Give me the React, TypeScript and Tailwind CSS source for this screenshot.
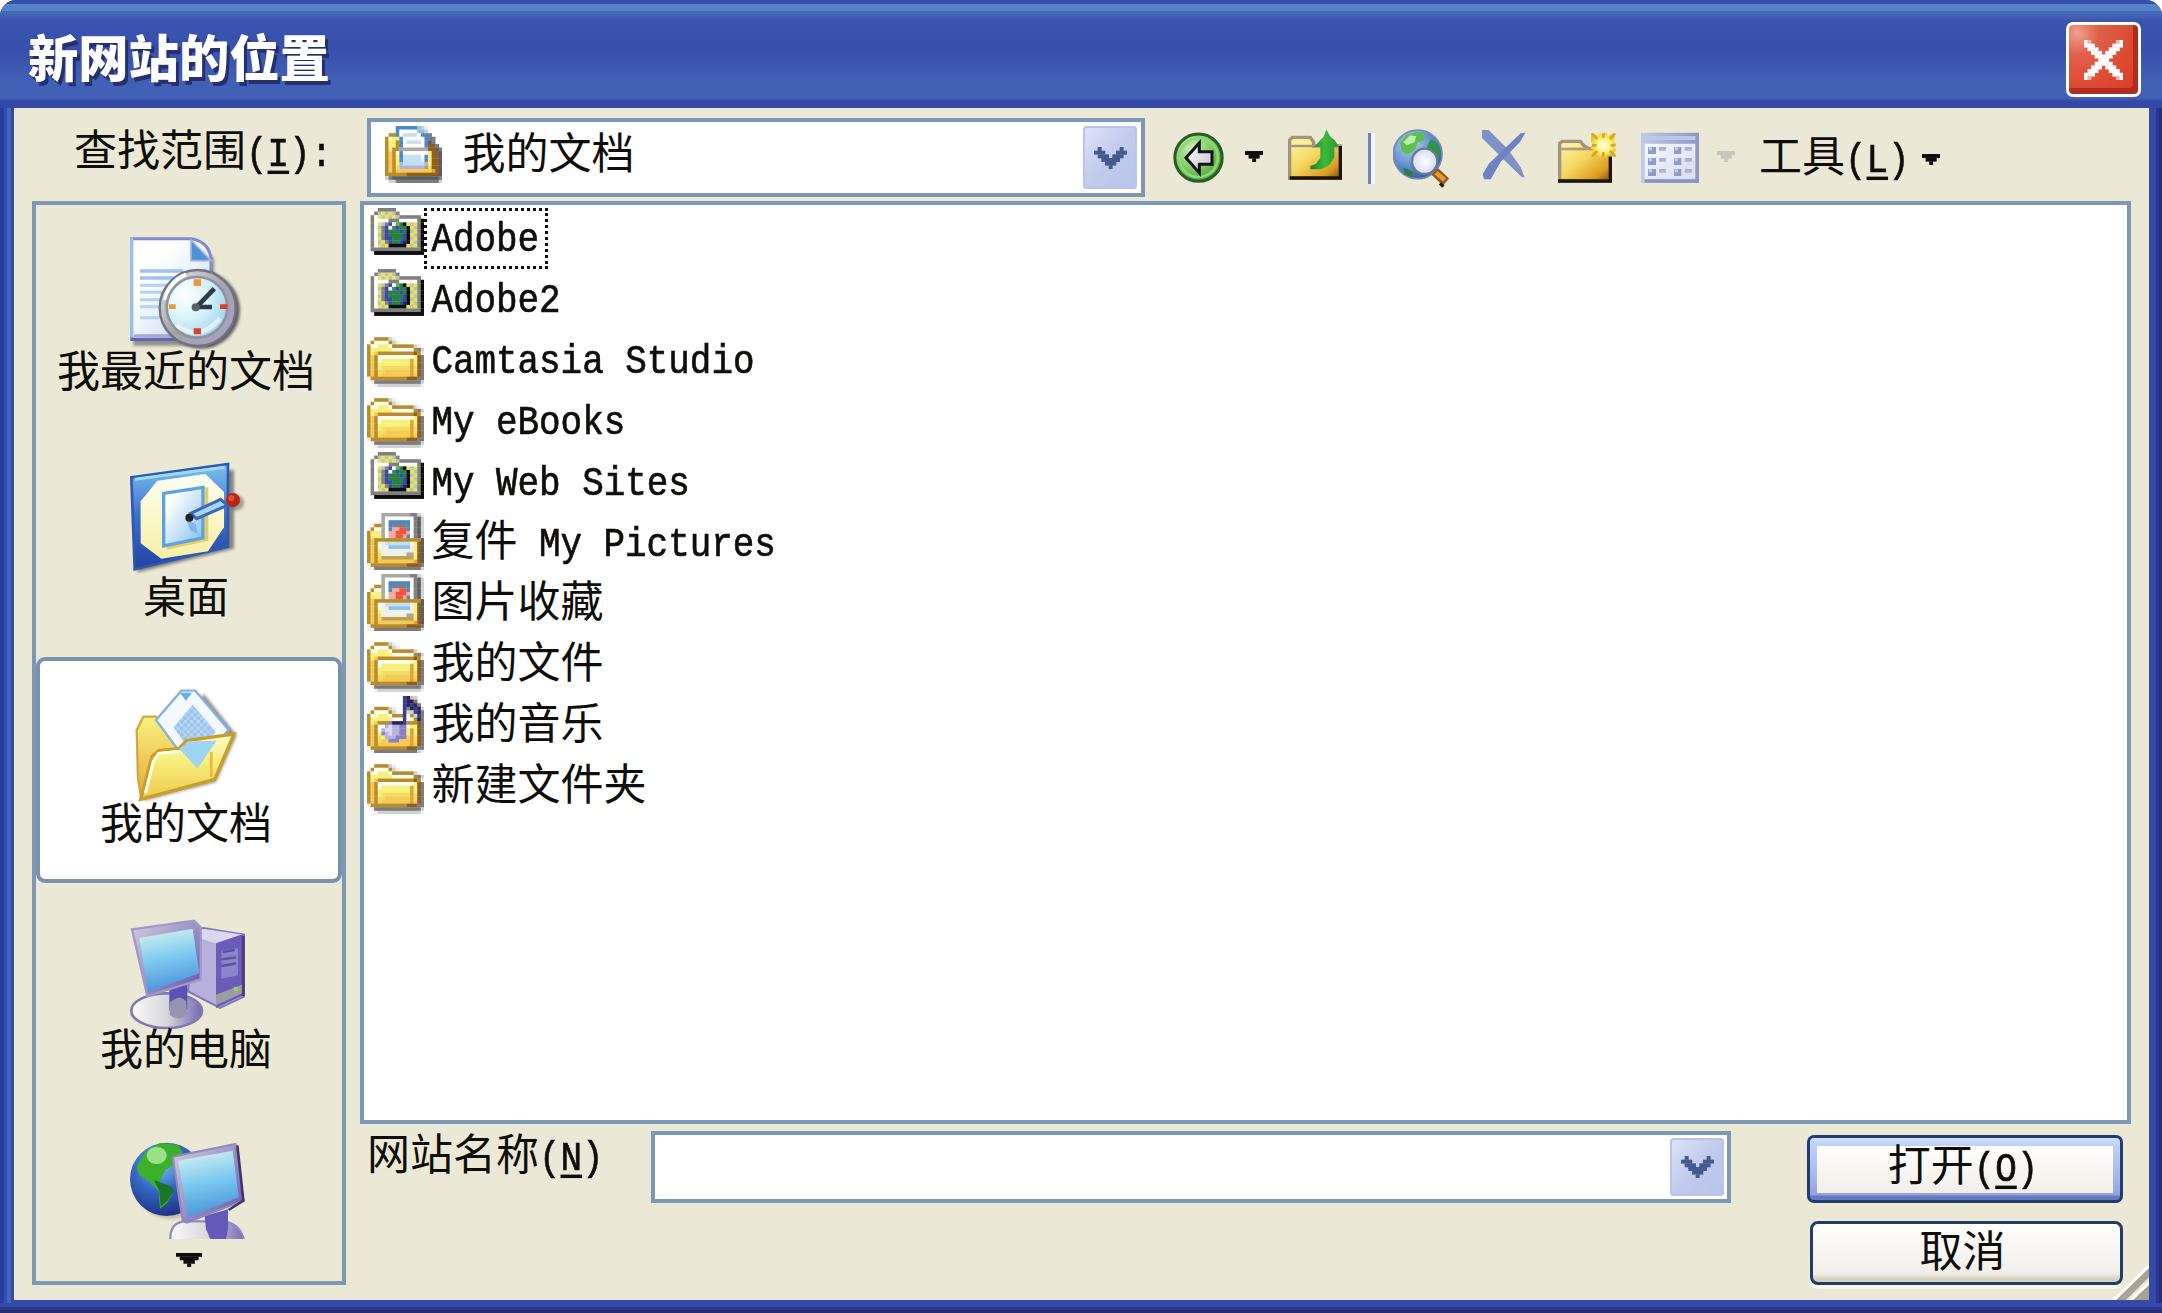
import React from "react";

type Palette = Record<string, string>;

function PixelArt({
  rows,
  palette,
  className = "h-[57.4px] w-[57.4px] shrink-0",
}: {
  rows: string[];
  palette: Palette;
  className?: string;
}) {
  const cells: React.ReactNode[] = [];
  rows.forEach((row, y) => {
    let x = 0;
    while (x < row.length) {
      const c = row[x];
      let n = 1;
      while (row[x + n] === c) n++;
      if (palette[c]) cells.push(<rect key={x + "-" + y} x={x} y={y} width={n + 0.08} height={1.08} fill={palette[c]} />);
      x += n;
    }
  });
  return (
    <svg className={className} viewBox={`0 0 ${rows[0].length} ${rows.length}`} preserveAspectRatio="none">
      {cells}
    </svg>
  );
}

const palette: Palette = {
  G: "#808080", W: "#ffffff", Y: "#e6e84a", S: "#c0c0b8", B: "#3a4aa8", N: "#2a8040", L: "#5cb84c",
  T: "#3c8090", K: "#0c0c0c", D: "#1f2a6c",
  O: "#b98c2a", o: "#8f5f1c", y: "#f6f07c", l: "#fffef0", a: "#f5cb55", m: "#dca43a", e: "#f4dc62",
  s: "#7c7c7e", t: "#d2d2d2", u: "#efefef",
  g: "#a8a8a6", d: "#5c5c60", b: "#4c88c6", r: "#ee5540", p: "#f6aaa0", c: "#c4e0f2", q: "#8cc0e6", i: "#f0f0e8", h: "#bda050",
  v: "#3a3c8c", n: "#23265c", f: "#b8aee0", k: "#8a80c4", w: "#dcd8f2",
  x: "#0f0e0c", z: "#455a8c", j: "#c6c6ba", A: "#f4b0a4",
};

const webFolder = [
  "...GGGGG........",
  "..GSYSYSG.......",
  ".GWYSYSYSGGGGGG.",
  ".GWWWWGGGWWWWWGK",
  ".GWYSGBWLNKYSYGK",
  ".GWSGBWTBNNKYSGK",
  ".GWYGBNNNBNKSYGK",
  ".GWSGBNNNNBKYSGK",
  ".GWYGBBNNNBKSYGK",
  ".GWSYGBNNBDKYSGK",
  ".GWYSYKKKKKYSYGK",
  ".GGGGGGGGGGGGGGK",
  "..KKKKKKKKKKKKKK",
  "................",
  "................",
  "................",
];
const folder = [
  "................",
  "................",
  "..OOOOtu........",
  ".OllllOtu.......",
  "OllyyylOOOOOOtu.",
  "OyyyyyyllllllOst",
  "OyaOOOOOOOOOOoOu",
  "OaOllllllllllyos",
  "OaOlyyyyyyyymyos",
  "OaOyyyyyyyyymyos",
  "OaOyeeeeeeeemeos",
  "OaOeeaaaaaaameos",
  "OaOeaaaaaaaamaos",
  "uOOOOOOOOOOoooss",
  ".ussssssssssssst",
  "..uttttttttttttu",
];
const pictures = [
  "....ggggggggGGtu",
  "....gWWWWWWWWGdt",
  "....gWbbbbbbWGdt",
  "..OOgWbGGGGbWGdt",
  ".OllgWbpprrbWGdt",
  "OyyygWpprrrpWGdt",
  "OyyygWpprrpbWGdt",
  "OaOOOOOOOOOOOOOd",
  "OaOliccccccciyod",
  "OaOliiqqqqqqiyod",
  "OaOyiiiiiiiiiyod",
  "OaOeiiiiiiiggyod",
  "OaOehhhhhhhhhyod",
  "OaOaaaaaaaaaamod",
  "uOOOOOOOOOOoooos",
  "uussssssssssssst",
];
const music = [
  "..........vnpt..",
  "..........vnns..",
  "..........vnvns.",
  "..OOOOtu..vsnvnt",
  ".OllllOt..vttvns",
  "OllyyylOOOvlOtvs",
  "OyyyyyylllvllOns",
  "OyaOOOknnnvOOOos",
  "OaOllfwffkklyyos",
  "OaOlfwwffkkymyos",
  "OaOykfwffkkymyos",
  "OaOeyfffkkkameos",
  "OaOeaakkkaaameos",
  "OaOaaaaaaaaamaos",
  "uOOOOOOOOOOoooss",
  "uusssssssssssstu",
];
const clipboard = [
  "...bbbbbbqtu....",
  "...bWWWWWqqt....",
  ".OObWccccWbbs...",
  "OlyybWWWWWWbss..",
  "OyyObWccccWbds..",
  "OyyObWWWWWWboos.",
  "OyOOggggggggoods",
  "OaOlbWWWWWWWyood",
  "OaOybcccccWbyood",
  "OaOybcccccibyood",
  "OaOyfccccccfyood",
  "OaOefffffffheood",
  "OaOaaaaaaaaaamod",
  "OOOOOOoooooooood",
  "tsddddddddddddds",
  ".ttsssssssssssst",
];
const chevron = [
  ".z.....z.",
  "zzz...zzz",
  ".zzz.zzz.",
  "..zzzzz..",
  "...zzz...",
  "....z....",
];
const cross = [
  "WA.......AW",
  "WWW.....WWW",
  ".WWW...WWW.",
  "..WWW.WWW..",
  "...WWWWW...",
  "....WWW....",
  "...WWWWW...",
  "..WWW.WWW..",
  ".WWW...WWW.",
  "WWW.....WWW",
  "WA.......AW",
];
const caret = ["xxxxx", ".xxx.", "..x.."];
const caretOff = ["jjjjj", ".jjj.", "..j.."];
const caretBig = ["xxxxxxx", ".xxxxx.", "..xxx..", "...x..."];

function Mono({ children }: { children: React.ReactNode }) {
  return (
    <span className="inline-block origin-[50%_72%] scale-y-[1.15] font-['Liberation_Mono','DejaVu_Sans_Mono',monospace] text-[35.9px] leading-[43px] [-webkit-text-stroke:0.6px_#0f0e0c]">
      {children}
    </span>
  );
}

/** Splits a caption into Chinese and Latin runs, so that Latin letters take half a cell each. */
function Txt({ children }: { children: string }) {
  const runs = children.split(/([\x20-\x7e]+)/).filter(Boolean);
  return <>{runs.map((r, i) => (/^[\x20-\x7e]/.test(r) ? <Mono key={i}>{r}</Mono> : <span key={i}>{r}</span>))}</>;
}

function Key({ k }: { k: string }) {
  return (
    <Mono>
      (<span className="underline decoration-[3px] underline-offset-[4px]">{k}</span>)
    </Mono>
  );
}

function DropButton() {
  return (
    <div className="flex h-full w-[54px] items-center justify-center rounded-[4px] bg-linear-to-br from-[#dfe5f7] via-[#c1cbec] to-[#b4c4ea] shadow-[inset_0_0_0_2px_#b9c4ea]">
      <PixelArt rows={chevron} palette={palette} className="h-[22px] w-[33px]" />
    </div>
  );
}

function BackIcon() {
  return (
    <svg className="h-[60px] w-[51px]" viewBox="309 57 153 180">
      <defs>
        <radialGradient id="bk" cx=".35" cy=".3" r=".75">
          <stop offset="0" stopColor="#c8ecb8" />
          <stop offset=".6" stopColor="#7cc85c" />
          <stop offset="1" stopColor="#4f9a3c" />
        </radialGradient>
        <linearGradient id="bka" x1="0" x2="1" y1="0" y2="1">
          <stop offset="0" stopColor="#fff" />
          <stop offset="1" stopColor="#c4c0cc" />
        </linearGradient>
      </defs>
      <circle cx="385.500" cy="143" r="71" fill="url(#bk)" stroke="#285c28" strokeWidth="9" />
      <circle cx="385.500" cy="143" r="58" fill="none" stroke="#8fd878" strokeWidth="8" />
      <path d="M348 143l40-44v26h38v38h-38v26z" fill="url(#bka)" stroke="#14141c" strokeWidth="9" />
    </svg>
  );
}

function FolderGradient({ id }: { id: string }) {
  return (
    <linearGradient id={id} x1="0" x2="1" y1="0" y2="1">
      <stop offset="0" stopColor="#fff8b0" />
      <stop offset=".45" stopColor="#f4d860" />
      <stop offset=".8" stopColor="#dd9c20" />
      <stop offset="1" stopColor="#7a4c10" />
    </linearGradient>
  );
}

function UpIcon() {
  return (
    <svg className="h-[60px] w-[54px]" viewBox="654 57 162 180">
      <defs>
        <FolderGradient id="up" />
        <linearGradient id="upa" x1="0" x2="1">
          <stop offset="0" stopColor="#1e7a2c" />
          <stop offset=".5" stopColor="#3cba3c" />
          <stop offset="1" stopColor="#2c9434" />
        </linearGradient>
      </defs>
      <path d="M659 205V90l8-8h54l10 14v12h80v97z" fill="url(#up)" stroke="#a3947c" strokeWidth="10" />
      <path d="M668 96h52" stroke="#faf09a" strokeWidth="10" />
      <path d="M664 108h70" stroke="#a3947c" strokeWidth="7" />
      <path d="M811 108v97M659 204h157" stroke="#1c1408" strokeWidth="10" fill="none" />
      <path d="M769 58l12 22 13 10 13 20h-14v32l-14 22-24 14h-34v-10l16-6 14-18v-34h-18l18-20 10-10z" fill="url(#upa)" />
    </svg>
  );
}

function SearchWebIcon() {
  return (
    <svg className="h-[60px] w-[57px]" viewBox="969 57 171 180">
      <defs>
        <radialGradient id="gl" cx=".35" cy=".3" r=".8">
          <stop offset="0" stopColor="#b4d0f4" />
          <stop offset=".6" stopColor="#5c88cc" />
          <stop offset="1" stopColor="#2c5090" />
        </radialGradient>
        <radialGradient id="len">
          <stop offset="0" stopColor="#fff" />
          <stop offset="1" stopColor="#d4dcf0" />
        </radialGradient>
      </defs>
      <circle cx="1043" cy="133" r="73" fill="url(#gl)" stroke="#6f8db4" strokeWidth="5" />
      <path d="M990 100l18-24 30-10 28 4-4 20-20 8-6 22-26 14-14-10z" fill="#5cc050" />
      <path d="M1000 96l20-20 18 2-4 18-24 10z" fill="#c0eca8" />
      <path d="M1082 88l20 12 10 28-8 18-20-22-16-6z" fill="#2f9444" />
      <path d="M1000 172l30 14-4 16-22-8z" fill="#2c7c50" />
      <path d="M1094 184l34 32" stroke="#8c5a20" strokeWidth="28" />
      <path d="M1098 188l26 22" stroke="#e8982c" strokeWidth="14" />
      <path d="M1110 220l10 10" stroke="#2c1c14" strokeWidth="10" />
      <circle cx="1064" cy="154" r="38" fill="url(#len)" stroke="#6c7890" strokeWidth="7" />
    </svg>
  );
}

function DeleteIcon() {
  return (
    <svg className="h-[60px] w-[46px]" viewBox="0 57 138 180" fill="none">
      <path d="M6 60h20l58 58 38 54 12 30h-8L64 142 6 84z" fill="#7f92c6" />
      <path d="M136 68l-14 2-44 42-52 50-18 30 4 16h20l30-52 58-60z" fill="#6e84c0" />
    </svg>
  );
}

function NewFolderIcon() {
  return (
    <svg className="h-[60px] w-[58px]" viewBox="234 57 174 180">
      <defs>
        <FolderGradient id="nf" />
        <radialGradient id="star">
          <stop offset="0" stopColor="#fffff0" />
          <stop offset=".6" stopColor="#fcf070" />
          <stop offset="1" stopColor="#ecc830" />
        </radialGradient>
      </defs>
      <path d="M239 213V100l8-6h54l12 14 14 8h64v97z" fill="url(#nf)" stroke="#a3947c" strokeWidth="10" />
      <path d="M248 106h52" stroke="#faf09a" strokeWidth="9" />
      <path d="M244 117h80" stroke="#ab9a8c" strokeWidth="8" />
      <path d="M391 140v73M234 213h162" stroke="#1c1408" strokeWidth="10" fill="none" />
      <path d="M333 68l22 10 4-10 8 10 4-10h8l4 10 25-10-8 26 8 4v8l-8 4 8 8v6l-8 4 8 14-26-8-8 10-6-10-8 8-6-8-21 10 8-24-8-4v-8l8-4-8-8z" fill="url(#star)" />
      <path d="M336 71l16 16m38 36l16 16M404 71l-14 16m-38 36l-16 16M370 70v14m0 42v14M336 106h14m42 0h14" stroke="#d4a820" strokeWidth="8" />
    </svg>
  );
}

function ViewsIcon() {
  const y = [111, 144, 177];
  return (
    <svg className="h-[60px] w-[58px]" viewBox="483 57 174 180">
      <defs>
        <linearGradient id="vw" x1="0" x2="1" y1="0" y2="1">
          <stop offset="0" stopColor="#f4f8ff" />
          <stop offset="1" stopColor="#dcdcec" />
        </linearGradient>
        <linearGradient id="vh" x1="0" x2="1">
          <stop offset="0" stopColor="#c0cae8" />
          <stop offset="1" stopColor="#8c96c4" />
        </linearGradient>
      </defs>
      <path d="M483 68h174v150H483z" fill="url(#vh)" />
      <path d="M494 78h152v12H494z" fill="#bcc8e4" />
      <path d="M494 101h152v108H494z" fill="url(#vw)" />
      <path d="M494 213h163" stroke="#8494c4" strokeWidth="10" />
      {y.map((v) => (
        <g key={v} fill="#8e9ccc">
          <path d={`M504 ${v}h24v21h-24zM582 ${v}h22v21h-22z`} />
          <path d={`M537 ${v}h21v11h-21zM614 ${v}h22v11h-22z`} fill="#a8b4d8" />
          <path d={`M506 ${v + 1}h10v9h-10zM584 ${v + 1}h10v9h-10z`} fill="#c4cce8" />
        </g>
      ))}
    </svg>
  );
}

const placeSvg = "h-[120px] w-[120px] shrink-0 overflow-visible";

function RecentIcon() {
  return (
    <svg className={placeSvg} viewBox="327 123 360 360">
      <defs>
        <linearGradient id="rd" x1="0" x2="1" y1="0" y2="1">
          <stop offset=".3" stopColor="#ffffff" />
          <stop offset="1" stopColor="#b8d4f4" />
        </linearGradient>
        <radialGradient id="rc" cx=".3" cy=".3" r=".8">
          <stop offset="0" stopColor="#fff" />
          <stop offset=".5" stopColor="#d8f2f8" />
          <stop offset="1" stopColor="#9cd0f0" />
        </radialGradient>
        <linearGradient id="rr" x1="0" x2="1" y1="0" y2="1">
          <stop offset="0" stopColor="#e8e8e8" />
          <stop offset=".5" stopColor="#a4a4ac" />
          <stop offset="1" stopColor="#a8a0cc" />
        </linearGradient>
        <filter id="soft"><feGaussianBlur stdDeviation="5" /></filter>
      </defs>
      <path d="M340 155h184l58 50v262H340z" fill="#555" opacity=".6" filter="url(#soft)" />
      <path d="M335 146h178q54 8 60 60v242H335z" fill="url(#rd)" stroke="#7f8cc8" strokeWidth="9" />
      <path d="M335 142v308" stroke="#9cc0ec" strokeWidth="9" />
      <path d="M332 448h190" stroke="#6068b0" strokeWidth="10" />
      <path d="M342 437h180" stroke="#aaa4d8" strokeWidth="9" />
      <path d="M360 243h130M360 264h110" stroke="#9cc4ea" strokeWidth="11" />
      <path d="M360 286h90M360 307h80M360 329h76M360 350h76M360 383h76" stroke="#b0d4f2" strokeWidth="9" />
      <path d="M513 150v62h60z" fill="#4c94dc" stroke="#a8b0dc" strokeWidth="5" />
      <circle cx="544" cy="360" r="116" fill="#303038" opacity=".75" filter="url(#soft)" />
      <circle cx="533" cy="354" r="114" fill="url(#rr)" stroke="#73737c" strokeWidth="7" />
      <path d="M436 330q12-58 62-76" stroke="#fff" strokeWidth="12" fill="none" />
      <circle cx="531" cy="352" r="91" fill="url(#rc)" stroke="#8c949c" strokeWidth="8" />
      <path d="M470 405q70 54 130-20" stroke="#fff" strokeWidth="14" fill="none" opacity=".6" />
      <path d="M521 268h22v20h-22zM447 343h20v14h-20z" fill="#f09838" />
      <path d="M600 343h22v14h-22zM521 415h22v18h-22z" fill="#dc4028" />
      <path d="M531 350l52-54M528 351h48" stroke="#2c3c48" strokeWidth="14" />
      <circle cx="527" cy="352" r="12" fill="#58606c" />
    </svg>
  );
}

function DesktopIcon() {
  return (
    <svg className={placeSvg} viewBox="327 801 360 360">
      <defs>
        <linearGradient id="df" x1="0" x2="0" y1="0" y2="1">
          <stop offset="0" stopColor="#7cc0f0" />
          <stop offset=".5" stopColor="#3c70c8" />
          <stop offset="1" stopColor="#2440a4" />
        </linearGradient>
        <linearGradient id="dy" x1="0" x2="0" y1="0" y2="1">
          <stop offset="0" stopColor="#fffef4" />
          <stop offset="1" stopColor="#f6f0a4" />
        </linearGradient>
        <linearGradient id="dp" x1="0" x2="1" y1="0" y2="1">
          <stop offset=".2" stopColor="#fff" />
          <stop offset="1" stopColor="#84bcf0" />
        </linearGradient>
      </defs>
      <path d="M352 870l290-30v236l-290 72z" fill="#444" opacity=".6" filter="url(#soft)" />
      <path d="M334 862l290-40v248l-280 68z" fill="url(#df)" stroke="#3058b0" strokeWidth="8" />
      <path d="M345 868l268-36" stroke="#9cdcf8" strokeWidth="9" />
      <path d="M412 872l144-20 56 54v106l-48 72-140 22-62-46V934z" fill="url(#dy)" />
      <path d="M560 892v156l-120 26" stroke="#e8cc60" strokeWidth="10" fill="none" />
      <path d="M431 910l118-18v152l-118 24z" fill="url(#dp)" stroke="#5ca4e0" strokeWidth="10" />
      <path d="M512 970l90-42 20 18-92 40z" fill="#a8d4f8" stroke="#3c68b8" strokeWidth="9" />
      <path d="M500 990l28 12 4 30-22-12z" fill="#7cb8ec" />
      <circle cx="508" cy="983" r="12" fill="#20241c" />
      <circle cx="648" cy="938" r="24" fill="#555" opacity=".5" filter="url(#soft)" />
      <circle cx="639" cy="930" r="21" fill="#b82418" />
      <circle cx="634" cy="924" r="9" fill="#e8502c" />
    </svg>
  );
}

function DocumentsIcon() {
  return (
    <svg className={placeSvg} viewBox="327 129 360 360">
      <defs>
        <linearGradient id="mf" x1="0" x2="0" y1="0" y2="1">
          <stop offset="0" stopColor="#fffbd0" />
          <stop offset=".4" stopColor="#f6f07c" />
          <stop offset="1" stopColor="#f0c850" />
        </linearGradient>
        <linearGradient id="mb" x1="0" x2="0" y1="0" y2="1">
          <stop offset="0" stopColor="#f8f080" />
          <stop offset="1" stopColor="#e8a838" />
        </linearGradient>
        <pattern id="chk" width="20" height="20" patternUnits="userSpaceOnUse">
          <path d="M0 0h20v20H0z" fill="#b8d6f2" />
          <path d="M0 0h10v10H0zM10 10h10v10H10z" fill="#98c2ea" />
        </pattern>
      </defs>
      <path d="M372 482l10-130 170-190 98 124-62 140z" fill="#555" opacity=".65" filter="url(#soft)" />
      <path d="M350 270l20-40h38l12 16 60 50v60l-116 120-10-60z" fill="url(#mb)" stroke="#d0a840" strokeWidth="7" />
      <path d="M408 240l76-88h42l100 118-60 60-94-4z" fill="#f4f8ff" stroke="#88b0e0" strokeWidth="7" />
      <path d="M460 262l58-68 70 82-40 40-48 2z" fill="url(#chk)" />
      <path d="M480 158h36l-18 24z" fill="#68ace8" />
      <path d="M362 478l34-128 20-18 60-6 24-24 142-20-58 136z" fill="url(#mf)" stroke="#c8a028" strokeWidth="10" />
      <path d="M376 460l24-96 16-24 62-6" stroke="#fffef0" strokeWidth="9" fill="none" />
      <path d="M478 326l28-22 84-2-58 84z" fill="#a0d4f4" />
      <path d="M574 336v76" stroke="#f0b848" strokeWidth="8" />
    </svg>
  );
}

function MonitorGradients({ p }: { p: string }) {
  return (
    <defs>
      <linearGradient id={p + "s"} x1=".3" x2=".5" y1="0" y2="1">
        <stop offset="0" stopColor="#d4f0f0" />
        <stop offset=".45" stopColor="#80ccf0" />
        <stop offset="1" stopColor="#4890d8" />
      </linearGradient>
      <linearGradient id={p + "b"} x1="0" x2="1">
        <stop offset="0" stopColor="#fafafa" />
        <stop offset=".5" stopColor="#d8d8dc" />
        <stop offset="1" stopColor="#7468b4" />
      </linearGradient>
      <linearGradient id={p + "f"} x1="0" x2="1" y1="0" y2="1">
        <stop offset="0" stopColor="#d4d0dc" />
        <stop offset="1" stopColor="#6054b0" />
      </linearGradient>
    </defs>
  );
}

function ComputerIcon() {
  return (
    <svg className={placeSvg} viewBox="327 807 360 360">
      <MonitorGradients p="pc" />
      <path d="M520 870l30-6 122 20v186l-72 34-96-50z" fill="#b8b0dc" stroke="#8078b8" strokeWidth="6" />
      <path d="M530 892l56 18 84-26-122-18z" fill="#dcd8ee" />
      <path d="M588 910l82-28v184l-82 38z" fill="#6a5cb8" />
      <path d="M670 888v180" stroke="#4c3c70" strokeWidth="9" />
      <path d="M604 932l50-8v82l-50 10z" fill="#8c84cc" />
      <path d="M604 958l44-6m-44 26l44-8m-40-34l36-6" stroke="#5850a0" strokeWidth="7" />
      <path d="M588 1064l78-30v26l-78 36z" fill="#9c9ca4" />
      <circle cx="648" cy="1047" r="7" fill="#88d850" />
      <ellipse cx="440" cy="1112" rx="106" ry="52" fill="url(#pcb)" stroke="#8078b0" strokeWidth="8" />
      <path d="M448 1044l54-14v76q-26 32-54 4z" fill="#5c50b4" />
      <path d="M448 1090q30-30 50-6l4 40q-30 20-52 2z" fill="#9894b0" />
      <path d="M336 868l186-26 20 20v156l-160 50z" fill="url(#pcf)" stroke="#a098c8" strokeWidth="7" />
      <path d="M358 894l160-28 20 134-154 56z" fill="url(#pcs)" />
    </svg>
  );
}

function NetworkIcon() {
  return (
    <svg className="h-[104px] w-[120px] shrink-0" viewBox="327 165 360 312">
      <MonitorGradients p="nt" />
      <defs>
        <radialGradient id="ng" cx=".4" cy=".3" r=".7">
          <stop offset="0" stopColor="#7cc4f4" />
          <stop offset=".5" stopColor="#3468c4" />
          <stop offset="1" stopColor="#203488" />
        </radialGradient>
      </defs>
      <ellipse cx="450" cy="306" rx="108" ry="110" fill="#665" opacity=".35" filter="url(#soft)" />
      <circle cx="440" cy="298" r="110" fill="url(#ng)" />
      <path d="M350 260l28-46 40-24 56 4 14 22-26 38-26 16-18 34 40 34-16 30-22 18-4-52-30-32-26-14z" fill="#3cb02c" />
      <path d="M402 300l54 20 6 12-20 30-20 18-4-48z" fill="#1c7428" />
      <ellipse cx="410" cy="226" rx="30" ry="26" fill="#b4ec9c" opacity=".8" />
      <path d="M452 490q-8-60 40-66h110q60 0 72 66z" fill="url(#ntb)" stroke="#9088c0" strokeWidth="7" />
      <path d="M554 408l70-20v60l-8 40h-40l-18-40z" fill="#6458b8" />
      <path d="M458 230l188-38 24 170-170 66-12-6z" fill="url(#ntf)" stroke="#8f88bc" strokeWidth="6" />
      <path d="M652 196l18 166-44 28" stroke="#44346c" strokeWidth="8" fill="none" />
      <path d="M474 242l164-30 18 140-152 60z" fill="url(#nts)" />
    </svg>
  );
}

const places = [
  { label: "我最近的文档", icon: <RecentIcon /> },
  { label: "桌面", icon: <DesktopIcon /> },
  { label: "我的文档", icon: <DocumentsIcon />, active: true },
  { label: "我的电脑", icon: <ComputerIcon /> },
];

const files: { name: string; art: string[]; focus?: boolean }[] = [
  { name: "Adobe", art: webFolder, focus: true },
  { name: "Adobe2", art: webFolder },
  { name: "Camtasia Studio", art: folder },
  { name: "My eBooks", art: folder },
  { name: "My Web Sites", art: webFolder },
  { name: "复件 My Pictures", art: pictures },
  { name: "图片收藏", art: pictures },
  { name: "我的文件", art: folder },
  { name: "我的音乐", art: music },
  { name: "新建文件夹", art: folder },
];

function TitleBar() {
  return (
    <header className="flex h-[108px] shrink-0 items-start justify-between bg-[linear-gradient(180deg,#3650aa_0px,#3650aa_4px,#5483cc_4px,#5483cc_11px,#4465b8_11px,#4465b8_14px,#3a53ae_22px,#3850ac_50px,#4260b5_82px,#4260b5_98px,#3a52ac_100px,#3347a4_101px,#3347a4_108px)] pr-[21px] pl-[28px]">
      <h1 className="mt-[30px] text-[50.3px] leading-[50px] font-black text-white [text-shadow:3px_4px_0_#26306e]">新网站的位置</h1>
      <button className="mt-[22px] flex h-[75px] w-[75px] items-center justify-center rounded-[7px] border-[3.5px] border-white bg-[radial-gradient(circle_at_12%_12%,#f0a090_0%,#e0604c_25%,#dc4c34_60%,#d83c20_100%)] shadow-[inset_-5px_-6px_0_#b02c20]">
        <PixelArt rows={cross} palette={palette} className="h-[40px] w-[39px]" />
      </button>
    </header>
  );
}

export default function App() {
  return (
    <div className="h-[1313px] w-[2162px] overflow-hidden bg-white">
      <div className="flex h-full w-full flex-col overflow-hidden rounded-t-[16px] bg-[#3347a4] font-['Noto_Sans_CJK_SC',sans-serif] text-[43px] leading-[43px] whitespace-pre text-[#0f0e0c]">
        <TitleBar />
        <div className="flex h-[1205px] bg-[linear-gradient(180deg,transparent_1192px,#3449a8_1192px,#3449a8_1199px,#29348e_1199px,#29348e_1202px,#252c70_1202px)]">
          <div className="h-[1195px] w-[14px] shrink-0 bg-[linear-gradient(90deg,#2c3c9c_0px,#2c3c9c_4px,#3750ac_4px,#3750ac_7px,#4366ba_7px,#4366ba_11px,#3449a4_11px)]" />
          <main className="flex h-[1192px] w-[2135px] shrink-0 flex-col bg-[#ebe9d6]">
            <div className="flex h-[93px] shrink-0 items-start">
              <div className="mt-[18px] ml-[60px] w-[293px]">
                查找范围
                <Key k="I" />
                <Txt>:</Txt>
              </div>
              <div className="mt-[10px] flex h-[79px] w-[778px] shrink-0 border-4 border-[#7c98b4] bg-white p-[4px]">
                <div className="ml-[10px] flex flex-1 items-start">
                  <PixelArt rows={clipboard} palette={palette} />
                  <span className="mt-[3px] ml-[20px]">我的文档</span>
                </div>
                <DropButton />
              </div>
              <div className="mt-[21px] flex items-start">
                <div className="ml-[28px]"><BackIcon /></div>
                <PixelArt rows={caret} palette={palette} className="mt-[22px] ml-[21px] h-[11px] w-[18px]" />
                <div className="ml-[25px]"><UpIcon /></div>
                <div className="mt-[4px] ml-[26px] h-[51px] w-[7px] border-l-[3.500px] border-[#6a84c4] bg-[#f2f8fa]" />
                <div className="ml-[18px]"><SearchWebIcon /></div>
                <div className="ml-[30px]"><DeleteIcon /></div>
                <div className="ml-[32px]"><NewFolderIcon /></div>
                <div className="ml-[25px]"><ViewsIcon /></div>
                <PixelArt rows={caretOff} palette={palette} className="mt-[22px] ml-[18px] h-[11px] w-[18px]" />
                <div className="mt-[3px] ml-[24px]">
                  工具
                  <Key k="L" />
                </div>
                <PixelArt rows={caret} palette={palette} className="mt-[25px] ml-[12px] h-[11px] w-[18px]" />
              </div>
            </div>

            <div className="ml-[18px] flex gap-[14px]">
              <nav className="flex h-[1084px] w-[314px] flex-col items-center overflow-hidden border-4 border-[#7c98b4]">
                {places.map((p) => (
                  <div
                    key={p.label}
                    className={
                      p.active
                        ? "flex h-[226px] w-full shrink-0 flex-col items-center rounded-[9px] bg-white pt-[26px] shadow-[inset_0_0_0_4px_#7892ac]"
                        : "flex h-[226px] w-full shrink-0 flex-col items-center pt-[26px]"
                    }
                  >
                    {p.icon}
                    <span className="-mt-[4px] mr-[6px]">{p.label}</span>
                  </div>
                ))}
                <div className="pt-[26px]"><NetworkIcon /></div>
                <PixelArt rows={caretBig} palette={palette} className="mt-[14px] h-[14px] w-[26px] shrink-0" />
              </nav>

              <div className="flex w-[1771px] flex-col">
                <div className="h-[923px] border-4 border-[#7c98b4] bg-white pt-[3px] pl-[3px]">
                  {files.map((f) => (
                    <div key={f.name} className="flex h-[61px] items-start">
                      <PixelArt rows={f.art} palette={palette} />
                      <span
                        className={
                          f.focus
                            ? "h-[61px] border-[3.5px] border-dotted border-[#0f0e0c] pr-[6px] pl-[4px]"
                            : "pt-[3px] pl-[7px]"
                        }
                      >
                        <Txt>{f.name}</Txt>
                      </span>
                    </div>
                  ))}
                </div>
                <div className="flex items-start pt-[7px]">
                  <div className="-mt-[1px] ml-[7px] w-[284px]">
                    网站名称
                    <Key k="N" />
                  </div>
                  <div className="flex h-[72px] w-[1080px] justify-end border-4 border-[#7c98b4] bg-white p-[3px]">
                    <DropButton />
                  </div>
                  <div className="mt-[4px] ml-[76px] flex flex-col items-end gap-[18px]">
                    <button className="h-[68px] w-[316px] rounded-[7px] border-[3.5px] border-[#223c70] bg-[linear-gradient(180deg,#cfe2fb_0px,#bcd2f4_7px,#a4b8e8_40px,#8ca4dc_57px,#6a78c0_58px)] px-[7px] pt-[7px] pb-[7px]">
                      <span className="block h-[47px] bg-linear-to-b from-white to-[#f0eee6] text-center">
                        <span className="relative -top-[5px] -left-[2px]">
                          打开
                          <Key k="O" />
                        </span>
                      </span>
                    </button>
                    <button className="h-[64px] w-[313px] rounded-[8px] border-[3.5px] border-[#223c66] bg-[linear-gradient(180deg,#ffffff_0%,#f0eee8_85%,#d4d0c0_95%)] text-center shadow-[0_4px_0_#f6f5ec]">
                      <span className="relative -top-[5px] -left-[4px]">取消</span>
                    </button>
                  </div>
                </div>
              </div>
            </div>
            <svg className="-mt-[21px] h-[36px] w-[37px] shrink-0 self-end" viewBox="0 0 37 36">
              <path d="M0 36L37 0v6L8 36z" fill="#fff" />
              <path d="M4 36L37 4v9L14 36z" fill="#a8a490" />
              <path d="M17 36l20-19v6L24 36z" fill="#fff" />
              <path d="M21 36l16-15v15z" fill="#a8a490" />
            </svg>
          </main>
          <div className="h-[1195px] w-[13px] shrink-0 bg-[linear-gradient(90deg,#3449a8_0px,#3449a8_7px,#2b368e_7px,#2b368e_10px,#262f74_10px)]" />
        </div>
      </div>
    </div>
  );
}
